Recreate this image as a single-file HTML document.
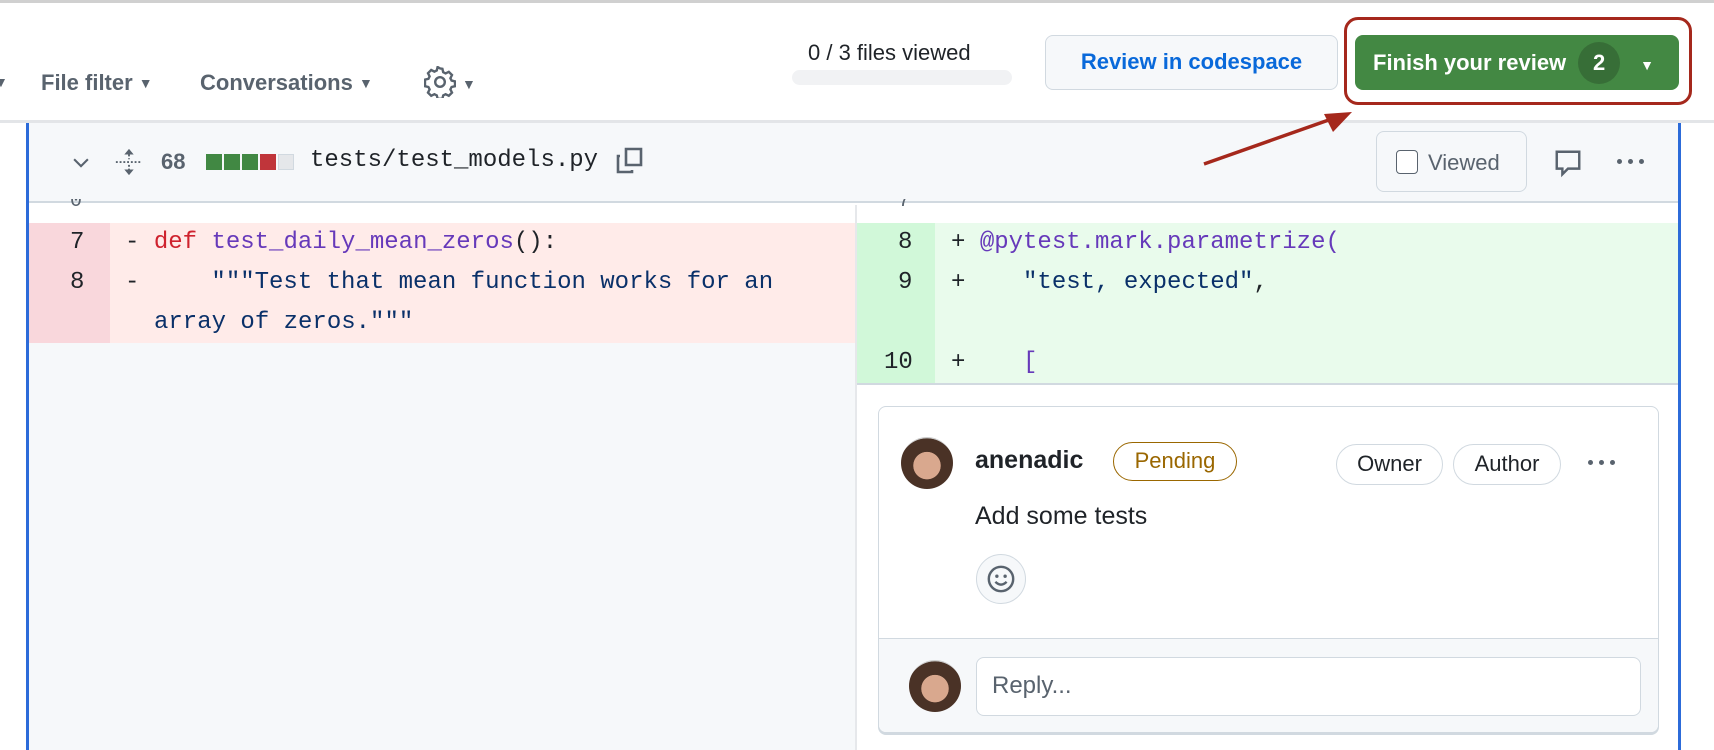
<!DOCTYPE html>
<html><head><meta charset="utf-8"><style>
*{box-sizing:border-box;margin:0;padding:0}
body{width:1714px;height:750px;overflow:hidden;background:#fff;font-family:"Liberation Sans",sans-serif;position:relative;color:#1f2328}
.a{position:absolute}
.mono{font-family:"Liberation Mono",monospace;font-size:24px}
.tb{font-size:22px;font-weight:bold;color:#59636e}
.pill{border:1.5px solid #d1d9e0;border-radius:22px;font-size:22px;text-align:center}
.dots{position:absolute;width:40px;height:8px}
.dots i{position:absolute;top:0;width:5px;height:5px;border-radius:3px;background:#59636e}
</style></head><body>
<div class="a" style="left:0;top:0;width:1714px;height:3px;background:#d0d0d0"></div>
<div class="a" style="left:0;top:120px;width:1714px;height:3px;background:#e3e5e8"></div>
<div class="a tb" style="left:-6px;top:74px;font-size:14px">▼</div>
<div class="a tb" style="left:41px;top:70px">File filter <span style="font-size:14px;vertical-align:2px">▼</span></div>
<div class="a tb" style="left:200px;top:70px">Conversations <span style="font-size:14px;vertical-align:2px">▼</span></div>
<svg class="a" style="left:424px;top:66px" width="32" height="32" viewBox="0 0 16 16"><path fill="none" stroke="#59636e" stroke-width="1.2" d="M8 1.2l1.2.2.4 1.7 1.2.6 1.6-.8 1.6 1.6-.8 1.6.6 1.2 1.7.4v2.4l-1.7.4-.6 1.2.8 1.6-1.6 1.6-1.6-.8-1.2.6-.4 1.7H6.8l-.4-1.7-1.2-.6-1.6.8-1.6-1.6.8-1.6-.6-1.2-1.7-.4V6.8l1.7-.4.6-1.2-.8-1.6L3.6 2l1.6.8 1.2-.6.4-1.7z"/><circle cx="8" cy="8" r="2.4" fill="none" stroke="#59636e" stroke-width="1.2"/></svg>
<div class="a tb" style="left:462px;top:76px;font-size:14px">▼</div>
<div class="a" style="left:808px;top:40px;font-size:22px;color:#1f2328">0 / 3 files viewed</div>
<div class="a" style="left:792px;top:70px;width:220px;height:15px;border-radius:8px;background:#f1f2f4"></div>
<div class="a" style="left:1045px;top:35px;width:293px;height:55px;border:1.5px solid #d1d9e0;border-radius:8px;background:#f6f8fa;color:#0969da;font-size:22px;font-weight:bold;text-align:center;line-height:52px">Review in codespace</div>
<div class="a" style="left:1344px;top:17px;width:348px;height:88px;border:3px solid #a5281c;border-radius:14px"></div>
<div class="a" style="left:1355px;top:35px;width:324px;height:55px;border-radius:8px;background:#438843;color:#fff;font-size:22px;font-weight:bold;line-height:55px;padding-left:18px">Finish your review<span style="display:inline-block;width:42px;height:42px;border-radius:21px;background:#376e37;text-align:center;line-height:42px;margin-left:12px">2</span><span style="font-size:14px;margin-left:20px">▼</span></div>
<!-- file container -->
<div class="a" style="left:26px;top:123px;width:3px;height:627px;background:#2c6bd9"></div>
<div class="a" style="left:1678px;top:123px;width:3px;height:627px;background:#2c6bd9"></div>
<div class="a" style="left:29px;top:123px;width:1649px;height:80px;background:#f6f8fa;border-bottom:2px solid #d1d9e0"></div>
<svg class="a" style="left:70px;top:151px" width="22" height="22" viewBox="0 0 16 16"><path d="M3 6l5 5 5-5" fill="none" stroke="#59636e" stroke-width="1.5"/></svg>
<svg class="a" style="left:114px;top:146px" width="30" height="32" viewBox="0 0 16 16"><path d="M8 1L5.5 4h5zM8 15l-2.5-3h5z" fill="#59636e"/><path d="M8 4v2.5M8 9.5V12M1 8h14" stroke="#59636e" stroke-width="1" stroke-dasharray="1 1" fill="none"/></svg>
<div class="a" style="left:161px;top:149px;font-size:22px;font-weight:bold;color:#59636e">68</div>
<div class="a" style="left:206px;top:154px;width:16px;height:16px;background:#418843"></div>
<div class="a" style="left:224px;top:154px;width:16px;height:16px;background:#418843"></div>
<div class="a" style="left:242px;top:154px;width:16px;height:16px;background:#418843"></div>
<div class="a" style="left:260px;top:154px;width:16px;height:16px;background:#c0353a"></div>
<div class="a" style="left:278px;top:154px;width:16px;height:16px;background:#e5e7ea;border:1px solid #d1d9e0"></div>
<div class="a mono" style="left:310px;top:147px;color:#1f2328">tests/test_models.py</div>
<svg class="a" style="left:614px;top:144px" width="32" height="34" viewBox="0 0 16 16"><path d="M3 5.5H2v8h7V12.5M6 2h7.5v8H6z" fill="none" stroke="#59636e" stroke-width="1.3"/></svg>
<div class="a" style="left:1376px;top:131px;width:151px;height:61px;border:1.5px solid #d1d9e0;border-radius:8px;background:#f6f8fa"></div>
<div class="a" style="left:1396px;top:150px;width:22px;height:24px;border:1.5px solid #59636e;border-radius:4px;background:#fff"></div>
<div class="a" style="left:1428px;top:150px;font-size:22px;color:#59636e">Viewed</div>
<svg class="a" style="left:1553px;top:146px" width="30" height="34" viewBox="0 0 16 16"><path d="M2 2h12v9H8l-3 3v-3H2z" fill="none" stroke="#59636e" stroke-width="1.3"/></svg>
<div class="dots" style="left:1617px;top:159px"><i style="left:0"></i><i style="left:11px"></i><i style="left:22px"></i></div>
<!-- diff -->
<div class="a" style="left:29px;top:205px;width:826px;height:545px;background:#f6f8fa"></div>
<div class="a" style="left:29px;top:205px;width:826px;height:18px;background:#fff"></div>
<div class="a" style="left:857px;top:205px;width:821px;height:545px;background:#fff"></div>
<div class="a" style="left:855px;top:205px;width:2px;height:545px;background:#e6e8eb"></div>
<div class="a" style="left:29px;top:223px;width:81px;height:120px;background:#f9d7dc"></div>
<div class="a" style="left:110px;top:223px;width:745px;height:120px;background:#ffebe9"></div>
<div class="a" style="left:857px;top:223px;width:78px;height:160px;background:#d1f8d9"></div>
<div class="a" style="left:935px;top:223px;width:743px;height:160px;background:#e9fbec"></div>
<div class="a" style="left:857px;top:383px;width:821px;height:2px;background:#d1d9e0"></div>
<div class="a mono" style="left:70px;top:199px;color:#59636e;font-size:20px;height:10px;overflow:hidden;line-height:6px">0</div>
<div class="a mono" style="left:898px;top:199px;color:#59636e;font-size:20px;height:10px;overflow:hidden;line-height:6px">7</div>
<div class="a mono" style="left:0;top:223px;line-height:40px;color:#1f2328">
<div style="position:absolute;left:70px;top:0">7</div>
<div style="position:absolute;left:70px;top:40px">8</div>
<div style="position:absolute;left:125px;top:0;white-space:pre">- <span style="color:#cf222e">def</span> <span style="color:#6639ba">test_daily_mean_zeros</span>():</div>
<div style="position:absolute;left:125px;top:40px;white-space:pre;color:#0a3069"><span style="color:#1f2328">-</span>     """Test that mean function works for an</div>
<div style="position:absolute;left:154px;top:80px;white-space:pre;color:#0a3069">array of zeros."""</div>
<div style="position:absolute;left:898px;top:0">8</div>
<div style="position:absolute;left:898px;top:40px">9</div>
<div style="position:absolute;left:884px;top:120px">10</div>
<div style="position:absolute;left:951px;top:0;white-space:pre">+ <span style="color:#6639ba">@pytest.mark.parametrize(</span></div>
<div style="position:absolute;left:951px;top:40px;white-space:pre">+    <span style="color:#0a3069">"test, expected"</span>,</div>
<div style="position:absolute;left:951px;top:120px;white-space:pre">+    <span style="color:#6639ba">[</span></div>
</div>
<!-- comment card -->
<div class="a" style="left:878px;top:406px;width:781px;height:327px;border:1.5px solid #d1d9e0;border-radius:8px;background:#fff;overflow:hidden;box-shadow:0 2px 0 #d1d9e0">
<div style="position:absolute;left:0;top:231px;width:100%;height:100px;background:#f6f8fa;border-top:1.5px solid #d1d9e0"></div>
</div>
<div class="a" style="left:901px;top:437px;width:52px;height:52px;border-radius:26px;background:radial-gradient(circle at 50% 55%,#d9a88e 0 35%,#4a3226 36% 70%,#ccc 71%)"></div>
<div class="a" style="left:975px;top:446px;font-size:25px;font-weight:bold">anenadic</div>
<div class="a pill" style="left:1113px;top:442px;width:124px;height:39px;border-color:#9a6700;color:#9a6700;line-height:36px">Pending</div>
<div class="a pill" style="left:1336px;top:444px;width:107px;height:41px;line-height:38px">Owner</div>
<div class="a pill" style="left:1453px;top:444px;width:108px;height:41px;line-height:38px">Author</div>
<div class="dots" style="left:1588px;top:460px"><i style="left:0"></i><i style="left:11px"></i><i style="left:22px"></i></div>
<div class="a" style="left:975px;top:502px;font-size:25px">Add some tests</div>
<div class="a" style="left:976px;top:554px;width:50px;height:50px;border-radius:25px;border:1.5px solid #d1d9e0;background:#f6f8fa"></div>
<svg class="a" style="left:986px;top:564px" width="30" height="30" viewBox="0 0 16 16"><circle cx="8" cy="8" r="6.5" fill="none" stroke="#59636e" stroke-width="1.3"/><circle cx="5.8" cy="6.5" r=".9" fill="#59636e"/><circle cx="10.2" cy="6.5" r=".9" fill="#59636e"/><path d="M5 9.5q3 3 6 0" fill="none" stroke="#59636e" stroke-width="1.3"/></svg>
<div class="a" style="left:909px;top:660px;width:52px;height:52px;border-radius:26px;background:radial-gradient(circle at 50% 55%,#d9a88e 0 35%,#4a3226 36% 70%,#ccc 71%)"></div>
<div class="a" style="left:976px;top:657px;width:665px;height:59px;border:1.5px solid #d1d9e0;border-radius:8px;background:#fff;font-size:24px;color:#59636e;padding-left:15px;line-height:56px">Reply...</div>
<svg class="a" style="left:1190px;top:100px" width="170" height="70"><line x1="14" y1="64" x2="150" y2="16" stroke="#a5281c" stroke-width="3.5"/><path d="M162 12L134 14L143 32z" fill="#a5281c"/></svg>
</body></html>
